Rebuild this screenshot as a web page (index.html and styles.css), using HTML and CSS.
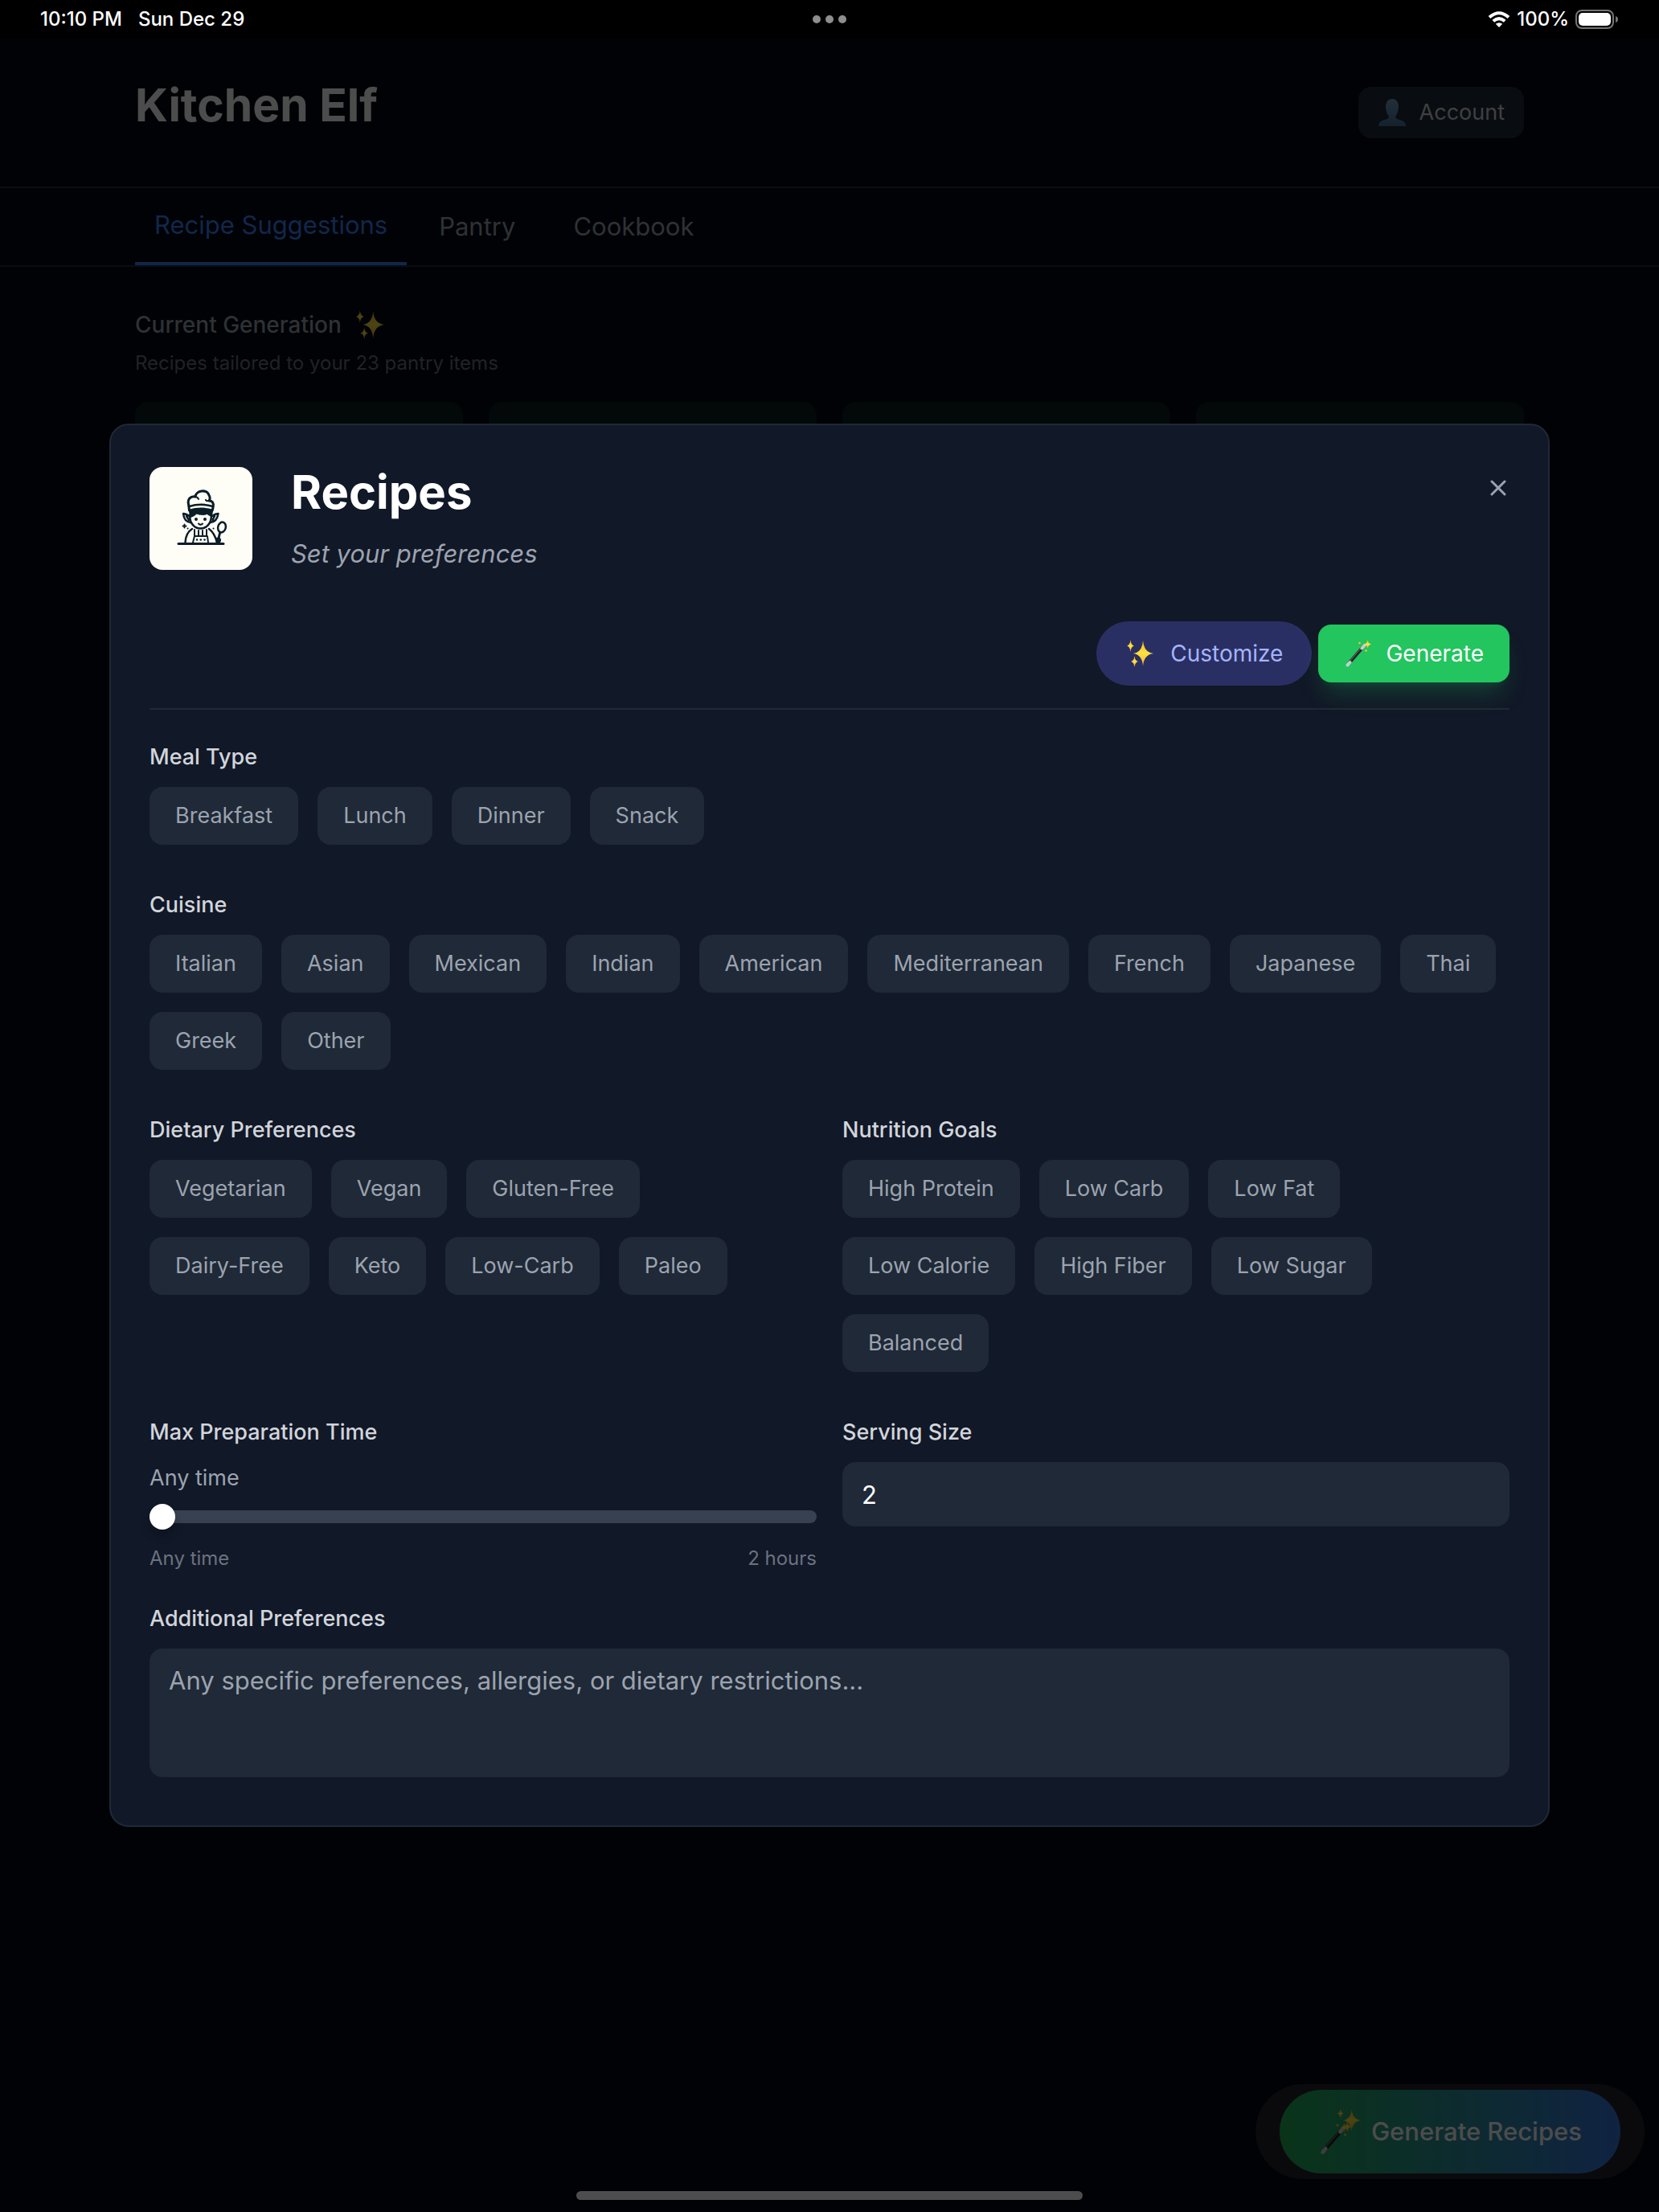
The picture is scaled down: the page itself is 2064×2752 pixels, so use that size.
FILE: index.html
```html
<!DOCTYPE html>
<html lang="en">
<head>
<meta charset="utf-8">
<meta name="viewport" content="width=device-width, initial-scale=1">
<title>Kitchen Elf</title>
<link rel="stylesheet" href="styles.css">
</head>
<body>
<svg class="defs" aria-hidden="true">
  <defs>
    <linearGradient id="gold" x1="0" y1="0" x2="0" y2="1">
      <stop offset="0" stop-color="#f5b52a"/><stop offset=".5" stop-color="#ffe23f"/><stop offset="1" stop-color="#f2a93b"/>
    </linearGradient>
    <linearGradient id="bust" x1="0" y1="0" x2="0" y2="1">
      <stop offset="0" stop-color="#759dba"/><stop offset="1" stop-color="#46719a"/>
    </linearGradient>
    <symbol id="sparkles" viewBox="0 0 36 36">
      <path fill="url(#gold)" d="M22 2Q23 16.500 35 18Q23 19.500 22 34Q21 19.500 10 18Q21 16.500 22 2Z"/>
      <path fill="url(#gold)" d="M6.500 1Q7 7.500 11 8.500Q7 9.500 6.500 16Q6 9.500 2 8.500Q6 7.500 6.500 1Z"/>
      <path fill="url(#gold)" d="M11.500 21Q12 27 16 28Q12 29 11.500 35Q11 29 7 28Q11 27 11.500 21Z"/>
    </symbol>
    <symbol id="wand" viewBox="0 0 36 36">
      <path stroke="#222426" stroke-width="4" d="M6 30.500L25 8.500"/>
      <path stroke="#6f7478" stroke-width="1" d="M7 28L24 8.500"/>
      <path stroke="#c9cdd0" stroke-width="4" stroke-linecap="round" d="M4.500 32.500L7.500 29M22.500 11.500L25.500 8"/>
      <path fill="url(#gold)" d="M29.500 1Q30 5.500 34 6.500Q30 7.500 29.500 12Q29 7.500 25 6.500Q29 5.500 29.500 1Z"/>
      <circle cx="19.500" cy="5" r="1.300" fill="#f8c533"/><circle cx="27.500" cy="14.500" r="1.300" fill="#f8c533"/>
    </symbol>
  </defs>
</svg>

<div class="status">
  <div class="status-side"><span>10:10 PM</span><span>Sun Dec 29</span></div>
  <div class="dots"><i></i><i></i><i></i></div>
  <div class="status-side status-right">
    <svg class="wifi" viewBox="0 0 28 20" fill="none" stroke="#fff" stroke-width="4"><path d="M2 7.500Q14 -3 26 7.500M6.800 12.200Q14 6 21.200 12.200"/><path fill="#fff" stroke="none" d="M14 20L9.800 15.800Q14 12.500 18.200 15.800Z"/></svg>
    <span>100%</span>
    <svg class="battery" viewBox="0 0 54 24"><rect x="1" y="1" width="46" height="22" rx="7" fill="none" stroke="#757575" stroke-width="2"/><rect x="4" y="4" width="40" height="16" rx="5" fill="#fff"/><path fill="#757575" d="M50 8Q53 9 53 12Q53 15 50 16Z"/></svg>
  </div>
</div>

<div class="page">
  <header class="top">
    <div class="wrap top-row">
      <h1>Kitchen Elf</h1>
      <button class="account" type="button">
        <svg viewBox="0 0 36 36" fill="url(#bust)"><path d="M18 1C23 1 26 5 26 11C26 16 24 20 22.500 22C22 25 23 26 27 27C33 28.500 35 31 35 35H1C1 31 3 28.500 9 27C13 26 14 25 13.500 22C12 20 10 16 10 11C10 5 13 1 18 1Z"/></svg>
        Account
      </button>
    </div>
  </header>
  <nav class="tabs">
    <div class="wrap tab-row">
      <a href="#suggestions" class="tab active">Recipe Suggestions</a>
      <a href="#pantry" class="tab">Pantry</a>
      <a href="#cookbook" class="tab">Cookbook</a>
    </div>
  </nav>
  <main class="wrap feed">
    <h2>Current Generation <svg viewBox="0 0 36 36"><use href="#sparkles"/></svg></h2>
    <p>Recipes tailored to your 23 pantry items</p>
    <div class="cards"><div class="card"></div><div class="card"></div><div class="card"></div><div class="card"></div></div>
  </main>
  <div class="fab-halo">
    <button class="fab" type="button">
      <span class="fab-icon"><svg class="fab-wand" viewBox="0 0 36 36"><use href="#wand"/></svg><svg class="fab-spark" viewBox="0 0 36 36"><use href="#sparkles"/></svg></span>
      Generate Recipes
    </button>
  </div>
</div>

<div class="overlay">
  <form class="modal" role="dialog" aria-labelledby="modal-title">
    <div class="modal-head">
      <svg class="logo" viewBox="0 0 128 128" fill="none" stroke="#0b1d28" stroke-width="3" stroke-linecap="round" stroke-linejoin="round">
        <rect width="128" height="128" fill="#fffef6" stroke="none"/>
        <path d="M49.500 54L48.500 46C47 40 51 36 57 37C58 29 71 27 74 35C76 38 75 41 74 42C79 42 81 46 78 54"/>
        <path d="M56 37Q60 37 61 40M74 42Q71 43 70 41" stroke-width="2"/>
        <path d="M49.500 49Q64 44.500 78.500 49M49.500 54Q64 49.500 78.500 54" stroke-width="2.500"/>
        <path fill="#0b1d28" d="M50 55Q64 51 78 55L77 61Q73 59 70 56Q71 59 67 59Q61 59 58 57Q57 60 51 62Z" stroke-width="2"/>
        <path d="M50 60C50 82 77 82 77 60" stroke-width="2.500"/>
        <path d="M49.500 61Q45 58 42 58Q43 68 51 69M78 61Q82 58 85.500 58Q84 68 76 69M46 61L49 66M81 61L78.500 66" stroke-width="2.500"/>
        <circle cx="58" cy="65" r="2" fill="#0b1d28" stroke="none"/><circle cx="69" cy="65" r="2" fill="#0b1d28" stroke="none"/>
        <path d="M61 70.500Q63.500 73 66 70.500" stroke-width="2"/>
        <path d="M53 77Q45 82 44.500 94M74 77Q81 82 84 94" stroke-width="2.500"/>
        <path d="M56 78V86M71 78V86M61 79V85M66 79V85M56 86H72L73 94M56 86L54 94" stroke-width="2"/>
        <path d="M59 90.500H59.100M63.700 90.500H63.800M68.500 90.500H68.600" stroke-width="2.500"/>
        <path d="M36 95.500H92"/>
        <ellipse cx="90" cy="75" rx="4.800" ry="6.500" transform="rotate(15 90 75)" stroke-width="2.500"/>
        <path d="M87.500 82L85.500 91"/><circle cx="85.500" cy="91" r="2.500" fill="#0b1d28" stroke-width="2"/>
        <path d="M43.500 71.500V75.500M41.500 73.500H45.500M47.500 76.500H47.600M79.500 76.500H79.600" stroke-width="2"/>
      </svg>
      <div class="titles">
        <h2 id="modal-title">Recipes</h2>
        <p>Set your preferences</p>
      </div>
      <button class="close" type="button" aria-label="Close"><svg viewBox="0 0 20 20" stroke="#9ca3af" stroke-width="3" stroke-linecap="round"><path d="M2 2L18 18M18 2L2 18"/></svg></button>
    </div>
    <div class="actions">
      <button class="customize" type="button"><svg viewBox="0 0 36 36"><use href="#sparkles"/></svg>Customize</button>
      <button class="generate" type="submit"><svg viewBox="0 0 36 36"><use href="#wand"/></svg>Generate</button>
    </div>

    <section class="group">
      <h3>Meal Type</h3>
      <div class="chips"><button type="button">Breakfast</button><button type="button">Lunch</button><button type="button">Dinner</button><button type="button">Snack</button></div>
    </section>
    <section class="group">
      <h3>Cuisine</h3>
      <div class="chips"><button type="button">Italian</button><button type="button">Asian</button><button type="button">Mexican</button><button type="button">Indian</button><button type="button">American</button><button type="button">Mediterranean</button><button type="button">French</button><button type="button">Japanese</button><button type="button">Thai</button><button type="button">Greek</button><button type="button">Other</button></div>
    </section>
    <div class="columns">
      <section class="group">
        <h3>Dietary Preferences</h3>
        <div class="chips"><button type="button">Vegetarian</button><button type="button">Vegan</button><button type="button">Gluten-Free</button><button type="button">Dairy-Free</button><button type="button">Keto</button><button type="button">Low-Carb</button><button type="button">Paleo</button></div>
      </section>
      <section class="group">
        <h3>Nutrition Goals</h3>
        <div class="chips"><button type="button">High Protein</button><button type="button">Low Carb</button><button type="button">Low Fat</button><button type="button">Low Calorie</button><button type="button">High Fiber</button><button type="button">Low Sugar</button><button type="button">Balanced</button></div>
      </section>
    </div>
    <div class="columns fields">
      <div class="group">
        <label for="prep">Max Preparation Time</label>
        <output for="prep">Any time</output>
        <input id="prep" class="slider" type="range" min="0" max="120" value="0">
        <div class="scale"><span>Any time</span><span>2 hours</span></div>
      </div>
      <div class="group">
        <label for="servings">Serving Size</label>
        <input id="servings" class="field" type="text" inputmode="numeric" value="2">
      </div>
    </div>
    <div class="group">
      <label for="extra">Additional Preferences</label>
      <textarea id="extra" class="field" placeholder="Any specific preferences, allergies, or dietary restrictions..."></textarea>
    </div>
  </form>
</div>
<div class="home-bar"></div>
</body>
</html>
```
FILE: styles.css
```css
* { box-sizing: border-box; margin: 0; }

body {
  min-height: 100vh;
  display: flex;
  flex-direction: column;
  background: #030712;
  color: #fff;
  font-family: Inter, "Liberation Sans", sans-serif;
  font-size: 28px;
  line-height: 40px;
}

button, input, textarea {
  border: 0;
  font: inherit;
  color: inherit;
  background: none;
}

button, label, h3 { font-weight: 400; }
a { text-decoration: none; color: inherit; }
svg { display: block; flex: none; }
.defs { position: absolute; width: 0; height: 0; }

/* Device status bar */
.status {
  position: relative;
  z-index: 3;
  height: 48px;
  padding: 0 50px;
  display: grid;
  grid-template-columns: 1fr auto 1fr;
  align-items: center;
  background: #000;
  font-size: 24px;
  font-weight: 500;
  line-height: 32px;
}
.status-side { display: flex; align-items: center; gap: 20px; }
.status-right { justify-content: flex-end; gap: 8px; }
.dots { display: flex; gap: 6px; }
.dots i { width: 10px; height: 10px; border-radius: 50%; background: #8e8e8e; }
.wifi { width: 28px; height: 20px; }
.battery { width: 54px; height: 24px; }

/* Page behind the dialog */
.page { flex: 1; }
.wrap { padding: 0 168px; }
.top { border-bottom: 2px solid #1f2937; }
.top-row {
  display: flex;
  justify-content: space-between;
  align-items: flex-start;
  padding-top: 48px;
  padding-bottom: 60px;
}
h1 { font-size: 57px; font-weight: 700; line-height: 70px; }
.account {
  display: flex;
  align-items: center;
  gap: 16px;
  height: 64px;
  margin-top: 12px;
  padding: 0 24px;
  border-radius: 16px;
  background: #1f2937;
  color: #d1d5db;
  font-size: 27px;
}
.account svg { width: 36px; height: 36px; }
.tabs { border-bottom: 2px solid #1f2937; }
.tab-row { display: flex; gap: 8px; }
.tab {
  height: 96px;
  padding: 0 32px;
  display: flex;
  align-items: center;
  color: #9ca3af;
  font-size: 31px;
}
.tab.active { padding: 0 24px; color: #3b82f6; border-bottom: 4px solid #3b82f6; }
.feed { padding-top: 48px; padding-bottom: 48px; }
.feed h2 {
  display: flex;
  align-items: center;
  gap: 16px;
  height: 48px;
  font-size: 28px;
  font-weight: 500;
  color: #9ca3af;
}
.feed h2 svg { width: 38px; height: 38px; }
.feed p { margin-top: 8px; font-size: 24px; line-height: 32px; color: #6b7280; }
.cards { display: grid; grid-template-columns: repeat(4, 1fr); gap: 32px; margin-top: 32px; }
.card { height: 400px; border-radius: 16px; background: #071f1b; }

.fab-halo {
  position: fixed;
  right: 18px;
  bottom: 41px;
  padding: 7px 30px;
  border-radius: 59px;
  background: #222429;
}
.fab {
  height: 104px;
  padding: 0 48px;
  display: flex;
  align-items: center;
  gap: 12px;
  border-radius: 52px;
  background: linear-gradient(90deg, #20b055, #3675dd);
  font-size: 31px;
  font-weight: 500;
}
.fab-icon { position: relative; width: 54px; height: 60px; }
.fab-wand { position: absolute; left: 0; bottom: 0; width: 44px; height: 44px; }
.fab-spark { position: absolute; right: 0; top: 0; width: 32px; height: 32px; }

/* Dialog */
.overlay {
  position: fixed;
  z-index: 2;
  inset: 48px 0 0;
  padding: 0 136px;
  display: flex;
  align-items: center;
  background: rgba(0, 0, 0, .7);
}
.modal {
  flex: 1;
  padding: 52px 48px 60px;
  border: 2px solid #1f2937;
  border-radius: 24px;
  background: #111827;
}
.modal-head { display: flex; align-items: flex-start; gap: 48px; }
.logo { width: 128px; height: 128px; border-radius: 16px; }
.titles { flex: 1; }
.titles h2 { font-size: 58px; font-weight: 700; line-height: 62px; }
.titles p { margin-top: 26px; font-size: 31px; font-style: italic; color: #9ca3af; }
.close { padding: 16px 4px; }
.close svg { width: 20px; height: 20px; }
.actions {
  display: flex;
  justify-content: flex-end;
  align-items: center;
  gap: 8px;
  margin-top: 64px;
  padding-bottom: 28px;
  border-bottom: 2px solid #1f2937;
}
.customize, .generate { display: flex; align-items: center; gap: 16px; }
.customize svg, .generate svg { width: 36px; height: 36px; }
.customize {
  gap: 20px;
  height: 80px;
  padding: 0 36px;
  border-radius: 40px;
  background: #2a2f63;
  color: #a5b4fc;
}
.generate {
  height: 72px;
  padding: 0 32px;
  border-radius: 16px;
  background: #22c55e;
  box-shadow: 0 20px 30px -6px rgba(34, 197, 94, .2), 0 8px 12px -8px rgba(34, 197, 94, .2);
}
.group { margin-top: 56px; }
.actions + .group { margin-top: 40px; }
.group h3, .group label {
  display: block;
  margin-bottom: 18px;
  font-size: 27px;
  font-weight: 500;
  line-height: 38px;
  color: #d1d5db;
}
.chips { display: flex; flex-wrap: wrap; gap: 24px; }
.chips button {
  height: 72px;
  padding: 0 32px;
  border-radius: 16px;
  background: #1f2937;
  color: #9ca3af;
  font-size: 27px;
}
.columns { display: grid; grid-template-columns: 1fr 1fr; gap: 32px; }
.group output { display: block; color: #9ca3af; font-size: 27px; }
.slider {
  appearance: none;
  display: block;
  width: 100%;
  height: 16px;
  margin: 20px 0 28px;
  border-radius: 8px;
  background: #374151;
}
.slider::-webkit-slider-thumb {
  appearance: none;
  width: 32px;
  height: 32px;
  border-radius: 50%;
  background: #fff;
  box-shadow: 0 8px 12px rgba(0, 0, 0, .2);
}
.scale { display: flex; justify-content: space-between; font-size: 24px; line-height: 32px; color: #6b7280; }
.fields + .group { margin-top: 40px; }
.field {
  display: block;
  width: 100%;
  height: 80px;
  padding: 16px 24px;
  border-radius: 16px;
  background: #1f2937;
  font-size: 31px;
  line-height: 48px;
}
textarea.field { height: 160px; resize: none; }
.field::placeholder { color: #9ca3af; }

.home-bar {
  position: fixed;
  z-index: 3;
  left: 50%;
  bottom: 15px;
  width: 630px;
  height: 11px;
  margin-left: -315px;
  border-radius: 6px;
  background: #4d4d4d;
}
```
